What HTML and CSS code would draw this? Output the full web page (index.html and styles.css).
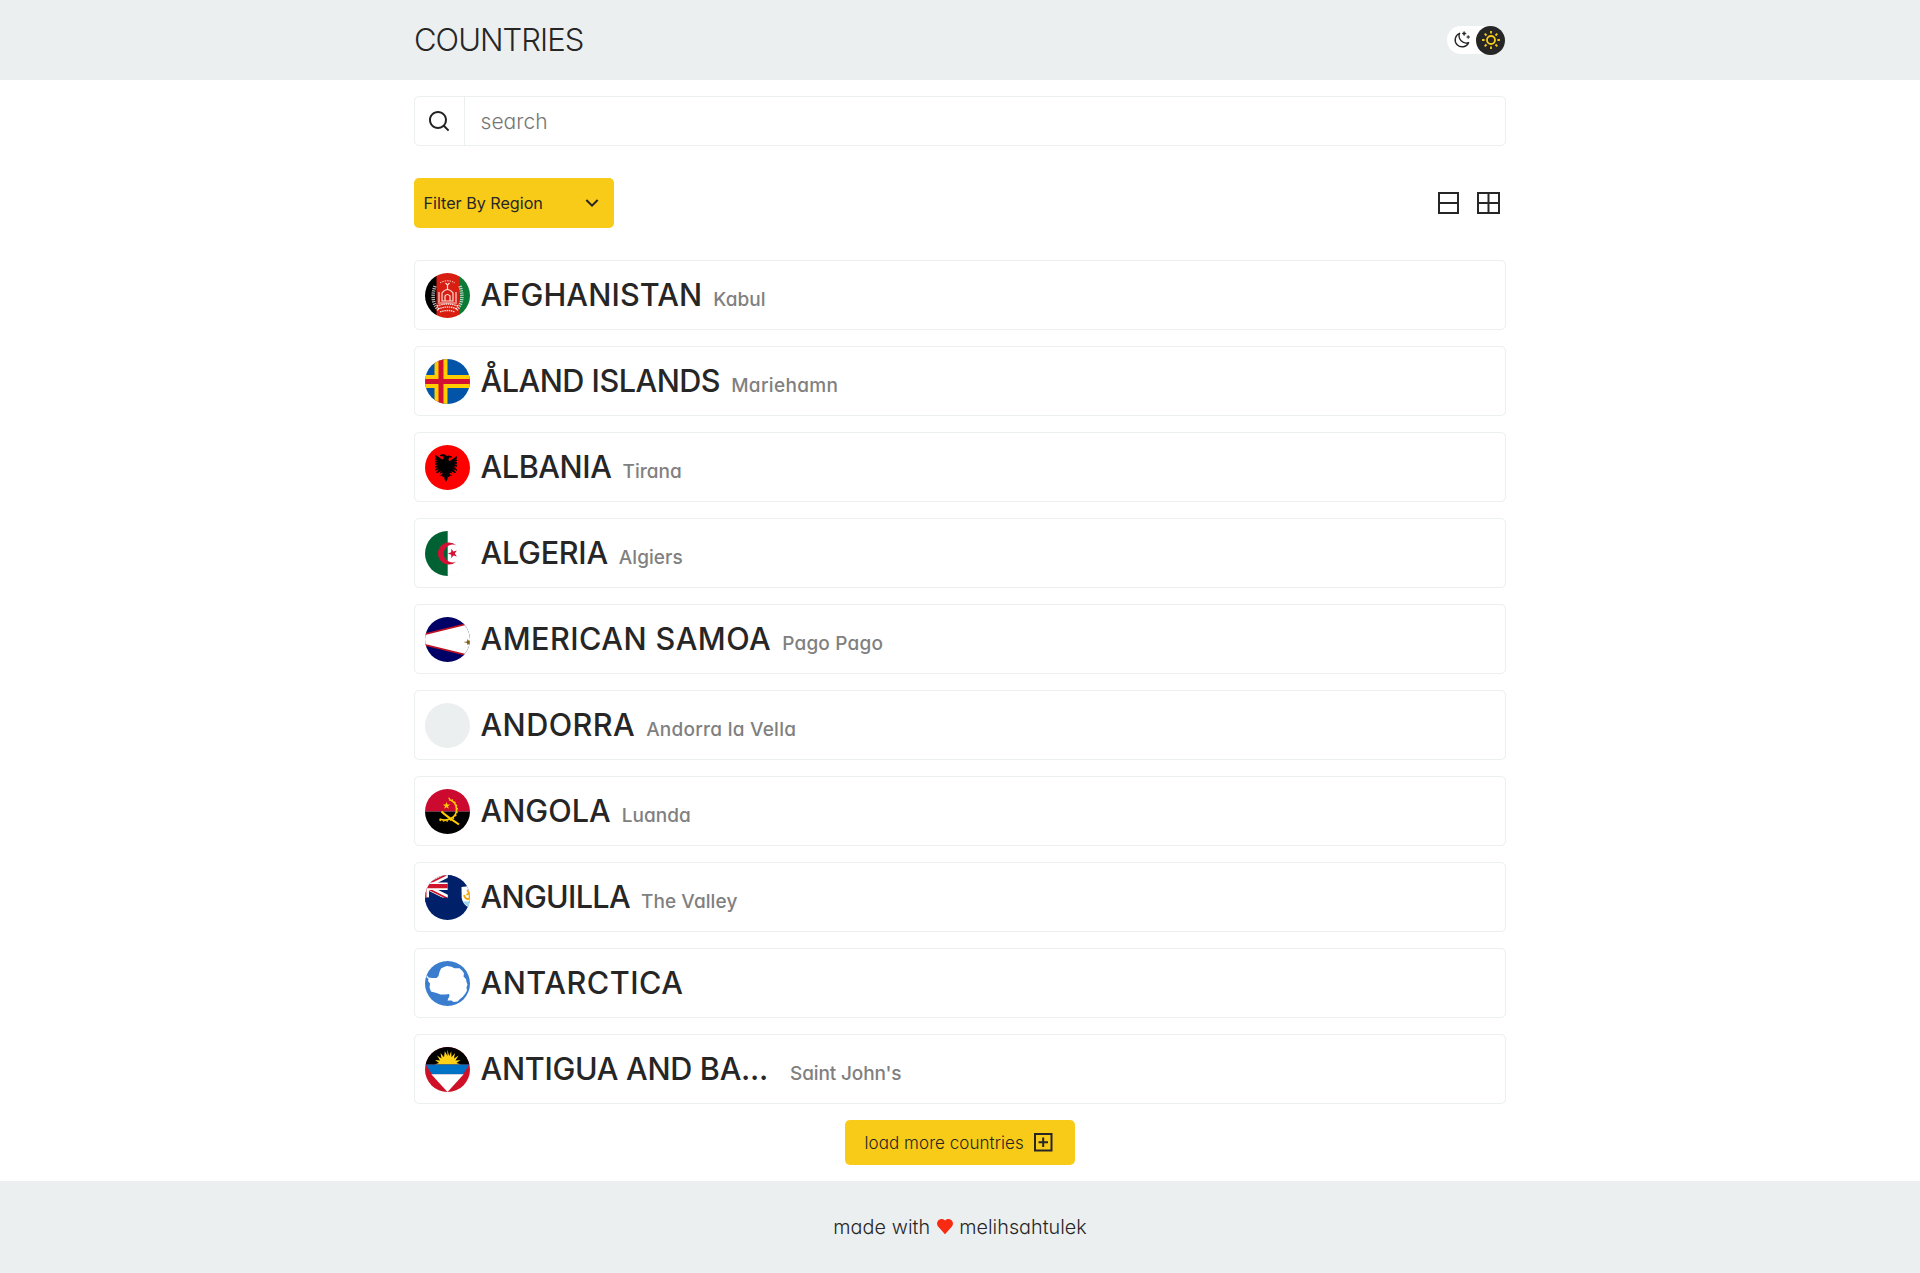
FILE: index.html
```html
<!DOCTYPE html>
<html lang="en">
<head>
<meta charset="utf-8">
<title>Countries</title>
<link rel="stylesheet" href="styles.css">
</head>
<body>
<header class="header">
  <div class="container header-inner">
    <h1 class="brand">COUNTRIES</h1>
    <div class="theme-toggle">
      <svg class="moon" viewBox="0 0 18 18" width="18" height="18" fill="none" stroke="#262626" stroke-width="1.4" stroke-linejoin="round"><path d="M6.600 2.300A7 7 0 1 0 15.600 11.600A7.100 7.100 0 0 1 6.600 2.300Z"/><path d="M11.100.4l.7 1.400 1.500.7-1.500.7-.7 1.500-.7-1.500-1.400-.7 1.400-.7zM15.200 4.300l.5 1.200 1.200.5-1.200.5-.5 1.200-.5-1.200-1.200-.5 1.200-.5z" fill="#262626" stroke-width=".5"/></svg>
      <span class="knob"><svg viewBox="0 0 18 18" width="18" height="18" fill="none" stroke="#f8cb18" stroke-width="1.8"><circle cx="9" cy="9" r="4"/><path d="M9 .1v2.500M9 15.400v2.500M.1 9h2.500M15.400 9h2.500M2.700 2.700l1.800 1.800M13.500 13.500l1.800 1.800M2.700 15.300l1.800-1.800M13.500 4.500l1.800-1.800"/></svg></span>
    </div>
  </div>
</header>
<main class="container main">
  <div class="search">
    <span class="search-icon"><svg viewBox="0 0 24 24" width="24" height="24" fill="#222"><path d="M18.031 16.617l4.283 4.282-1.415 1.415-4.282-4.283A8.96 8.96 0 0 1 11 20c-4.968 0-9-4.032-9-9s4.032-9 9-9 9 4.032 9 9a8.96 8.96 0 0 1-1.969 5.617zm-2.006-.742A6.977 6.977 0 0 0 18 11c0-3.868-3.133-7-7-7-3.868 0-7 3.132-7 7 0 3.867 3.132 7 7 7a6.977 6.977 0 0 0 4.875-1.975l.15-.15z"/></svg></span>
    <input class="search-input" type="text" placeholder="search">
  </div>
  <div class="toolbar">
    <div class="filter">Filter By Region
      <svg viewBox="0 0 24 24" width="24" height="24" fill="#262626"><path d="M12 13.172l4.950-4.950 1.414 1.414L12 16 5.636 9.636 7.050 8.222z"/></svg>
    </div>
    <div class="views">
      <svg viewBox="0 0 24 24" width="24" height="24" fill="none" stroke="#262626" stroke-width="2"><path d="M3 2h19v20H3zM3 12h19"/></svg>
      <svg viewBox="0 0 24 24" width="24" height="24" fill="none" stroke="#262626" stroke-width="2"><path d="M2 2h21v20H2zM2 12h21M12.500 2v20"/></svg>
    </div>
  </div>
  <ul class="list">
    <li class="row afghanistan">
      <svg class="flag" viewBox="0 0 45 45"><path fill="#000" d="M0 0h12v45H0z"/><path fill="#d81e10" d="M11.500 0h23v45h-23z"/><path fill="#0a7a36" d="M34 0h11v45H34z"/>
        <g fill="none" stroke="#fff" stroke-opacity=".85"><path stroke-width="1" stroke-dasharray="1.500 1" d="M15 10q7.500-4.500 15 0"/><path stroke-width="3.500" stroke-dasharray="1.200 1" stroke-opacity=".7" d="M10 13c-3 9-3 18 4 24M35 13c3 9 3 18-4 24"/><path stroke-width="1.300" stroke-dasharray="1.500 .7" d="M12 33q10-4 21 0M13 36q10-4 19 0M15 39q8-3 15 0"/><path stroke-width="1.200" d="M20.500 10l2 2 2-2M22.500 12v4M17 20q5.500-7 11 0v8H17zM14 19v10M31 19v10M13 30h19M20 28v-5q2.500-3 5 0v5"/></g></svg>
      <h2 class="name">AFGHANISTAN</h2><span class="city">Kabul</span></li>
    <li class="row aland">
      <svg class="flag" viewBox="0 0 45 45"><path fill="#0254a8" d="M0 0h45v45H0z"/><path fill="#ffcd00" d="M9.500 0h13v45h-13zM0 16h45v13H0z"/><path fill="#d21034" d="M13.500 0h5v45h-5zM0 20h45v5H0z"/></svg>
      <h2 class="name">ÅLAND ISLANDS</h2><span class="city">Mariehamn</span></li>
    <li class="row albania">
      <svg class="flag" viewBox="0 0 45 45"><path fill="#f00" d="M0 0h45v45H0z"/><path d="M22.500 13l-1-2.500-3-1.500-3 .8-.8 1.200 3 .2 1 2.300-1.500 1-3-2-4-3v2.500l2 1.300-2.200-.2v1.500l2.700 1-2.700.2v1.500l2.900.4-2.900.9v1.500l3.200-.3-3.200 1.800v1.500l3.500-1.200-3.500 2.700v1.500l4-2-3 3.500 1.200.6 3.800-2.300-1.500 2.800 3-1.200-.3 1.700-2.700 1.300 2.700.3.800 1.500 1.200-.8.3 2.500 1.500 3 1.500-3 .3-2.500 1.200.8.8-1.500 2.700-.3-2.700-1.300-.3-1.700 3 1.200-1.500-2.800 3.800 2.300 1.200-.6-3-3.500 4 2v-1.500l-3.500-2.700 3.500 1.200V23l-3.200-1.800 3.200.3V20l-2.900-.9 2.900-.4v-1.500l-2.700-.2 2.700-1v-1.500l-2.200.2 2-1.300v-2.500l-4 3-3 2-1.500-1 1-2.300 3-.2-.8-1.200-3-.8-3 1.500z"/></svg>
      <h2 class="name">ALBANIA</h2><span class="city">Tirana</span></li>
    <li class="row algeria">
      <svg class="flag" viewBox="0 0 45 45"><path fill="#fff" d="M0 0h45v45H0z"/><path fill="#006233" d="M0 0h22.700v45H0z"/><path fill="#d21034" d="M31.500 14.500a11 11 0 1 0 0 16 8.900 8.900 0 1 1 0-16zM22.800 22.500l3.400-1.200.1-3.600 2.100 2.900 3.500-1-2.100 2.900 2.100 2.900-3.500-1-2.100 2.900-.1-3.600z"/></svg>
      <h2 class="name">ALGERIA</h2><span class="city">Algiers</span></li>
    <li class="row samoa">
      <svg class="flag" viewBox="0 0 45 45"><path fill="#006" d="M0 0h45v45H0z"/><path fill="#fff" stroke="#bd1021" stroke-width="1.700" d="M-22 22.500L48 5.300v34.400z"/><path fill="#806018" d="M38.500 25l3.500-.5.500-2.500 1.500 2 2-1v5l-2-1-1.500 1-.5-2z"/></svg>
      <h2 class="name">AMERICAN SAMOA</h2><span class="city">Pago Pago</span></li>
    <li class="row andorra">
      <svg class="flag" viewBox="0 0 45 45"></svg>
      <h2 class="name">ANDORRA</h2><span class="city">Andorra la Vella</span></li>
    <li class="row angola">
      <svg class="flag" viewBox="0 0 45 45"><path fill="#cc092f" d="M0 0h45v22.500H0z"/><path d="M0 22.500h45V45H0z"/><g fill="none" stroke="#ffcb00"><path stroke-width="1.700" d="M24 10.500a10.300 10.300 0 0 1 1.500 19.300c-4 1.800-7.500 1.500-11 .2"/><path stroke-width="1.200" stroke-dasharray="1.500 2" d="M23.500 9.200a11.700 11.700 0 0 1 2.500 21.800c-4.500 1.800-8.500 1.300-12 0"/><path stroke-width="2.100" d="M16.500 22.500c4 4 10 8 17.500 13"/></g><path fill="#ffcb00" d="M21.500 13l1 2.500h2.700L23 17.200l.8 2.600-2.300-1.500-2.300 1.500.8-2.600-2.200-1.700h2.700z"/></svg>
      <h2 class="name">ANGOLA</h2><span class="city">Luanda</span></li>
    <li class="row anguilla">
      <svg class="flag" viewBox="0 0 45 45"><path fill="#00206a" d="M0 0h45v45H0z"/><path stroke="#fff" stroke-width="5" d="M-22.500 0l45.300 22.500M-22.500 22.500L22.800 0"/><path stroke="#cf142b" stroke-width="1.800" d="M0 12.200l22 11M2 9.300L21 0"/><path fill="#fff" d="M-1 7.500h23.800v7.500H-1zM0 7.500h4v15H0z"/><path fill="#00206a" d="M0 22.700h23.500V27H0zM22.800 0H27v24h-4.200z"/><path fill="#cf142b" d="M0 9h22.800v4.300H0zM0 13h1.500v9.500H0z"/><path fill="#fff" d="M36.500 12q4-.5 8.500-1v22q-7-2.500-8.300-10z"/><path fill="#9cd3ee" d="M37.800 26.500H45V32q-5-1.500-7.200-5.500z"/><path fill="none" stroke="#f7a100" stroke-width="1.700" d="M42 15q3.500 3-.5 5M39 20q1 4.500 5.500 4M44.500 18v6"/></svg>
      <h2 class="name">ANGUILLA</h2><span class="city">The Valley</span></li>
    <li class="row antarctica">
      <svg class="flag" viewBox="0 0 45 45"><path fill="#3a7dce" d="M0 0h45v45H0z"/><path fill="#fff" d="M1.500 13.500l2 3 4 .5h4l2-2 1-4 1.500-3.500L19 6l3-1 4.500.8 3 1.500h5L37.500 10l1.500 2.500-.5 3L41 18l.5 3 1 2.500-1 3 .5 3-2 3.500-2.500 3-3 2.500-2 2-4 .5-2-1.500h-4l1-2.500 1-2-.5-2-3.500.5h-5l-4-1.500L6 30.500l-1.500-4 .5-4L3 20l.5-2-2-2z"/></svg>
      <h2 class="name">ANTARCTICA</h2></li>
    <li class="row antigua">
      <svg class="flag" viewBox="0 0 45 45"><path fill="#ce1126" d="M0 0h45v45H0z"/><path d="M0 0h45v17.500H0z"/><path fill="#fcd116" d="M9.500 17.500l4.500-1.500-4-3 5 .5-3-5 4.500 3-1-5.500 3.500 4.300.8-6L22.500 9l-.2-6.500 1.900 6.500 2-4.700.3 6L30 6l-1 5.500 4.500-3-3 5 5-.5-4 3 4.500 1.500z"/><path fill="#0072c6" d="M.8 17.500h43.400L38 27.500H7z"/><path fill="#fff" d="M6.300 27.300h32.400L22.500 45z"/></svg>
      <h2 class="name">ANTIGUA AND BA...</h2><span class="city">Saint John's</span></li>
  </ul>
  <button class="load">load more countries
    <svg viewBox="0 0 24 24" width="24" height="24" fill="none" stroke="#262626" stroke-width="2"><path d="M4 3h16.500v16.500H4zM7.500 11.200H17M12.200 6.500V16"/></svg>
  </button>
</main>
<footer class="footer">
  <span class="made">made with</span>
  <svg viewBox="0 0 16 16" width="16" height="16"><path fill="#f92a12" d="M8 1.400A4.600 4.600 0 0 1 14.700 7.800L8 15.300 1.300 7.800A4.600 4.600 0 0 1 8 1.400z"/></svg>
  <span class="author">melihsahtulek</span>
</footer>
</body>
</html>
```
FILE: styles.css
```css
* { box-sizing: border-box; margin: 0; padding: 0; }
body {
  font-family: "Inter", "Noto Sans", sans-serif;
  font-feature-settings: "cv11";
  color: #262626;
  background: #fff;
}
svg { display: block; flex: none; }
.container { width: 1092px; margin: 0 auto; }

.header { height: 80px; background: #ebeff0; }
.header-inner { height: 100%; display: flex; align-items: center; justify-content: space-between; }
.brand { font-size: 31px; font-weight: 300; letter-spacing: -0.96px; padding-bottom: 2px; }
.theme-toggle {
  width: 58px; height: 28px; margin-right: 1px;
  display: flex; align-items: center; justify-content: space-between;
  padding-left: 6px; border-radius: 14px; background: #fff;
}
.knob {
  width: 29px; height: 29px; border-radius: 50%; background: #262626;
  display: flex; align-items: center; justify-content: center;
}

.main { display: flex; flex-direction: column; padding: 16px 0; }
.search {
  height: 50px; display: flex; overflow: hidden;
  border: 1px solid #ebeff0; border-radius: 5px;
}
.search-icon {
  width: 50px; padding-right: 1px;
  display: flex; align-items: center; justify-content: center;
  border-right: 1px solid #ebeff0;
}
.search-input {
  flex: 1; border: 0; outline: 0; padding-left: 15.500px; background: none;
  font: inherit; font-size: 21px; font-weight: 300; letter-spacing: 0.05px;
  font-feature-settings: inherit;
}
.search-input::placeholder { color: #757575; }

.toolbar { display: flex; align-items: center; justify-content: space-between; margin: 32px 0; }
.filter {
  width: 200px; height: 50px; padding: 0 10px 0 9.500px;
  display: flex; align-items: center; justify-content: space-between;
  border-radius: 5px; background: #f8cb18;
  font-size: 16.200px; letter-spacing: -0.03px;
}
.views { display: flex; gap: 16px; padding-right: 6px; }

.list { list-style: none; display: flex; flex-direction: column; gap: 16px; }
.row {
  height: 70px; padding-left: 10px;
  display: flex; align-items: baseline;
  border: 1px solid #ebeff0; border-radius: 5px;
}
.flag {
  width: 45px; height: 45px; align-self: center; margin-right: 10.500px;
  border-radius: 50%; background: #ebeff0;
}
.name { font-size: 30.600px; line-height: 68px; font-weight: 500; margin-right: 11px; white-space: nowrap; }
.city { font-size: 19px; font-weight: 500; color: #808080; white-space: nowrap; }

.afghanistan .name { letter-spacing: 0.12px; }
.aland .name { letter-spacing: -0.5px; }
.albania .name { letter-spacing: -0.42px; }
.algeria .name { letter-spacing: -0.28px; }
.samoa .name { letter-spacing: 0.46px; }
.andorra .name { letter-spacing: 0.42px; }
.angola .name { letter-spacing: 0; }
.anguilla .name { letter-spacing: -0.7px; }
.antarctica .name { letter-spacing: 0.52px; }
.antigua .name { letter-spacing: -0.3px; width: 298.500px; }
.afghanistan .city { letter-spacing: 0.08px; }
.aland .city { letter-spacing: 0.35px; }
.albania .city { letter-spacing: 0.05px; }
.algeria .city { letter-spacing: 0.05px; }
.samoa .city { letter-spacing: 0.2px; }
.andorra .city { letter-spacing: 0.25px; }
.angola .city { letter-spacing: 0.04px; }
.anguilla .city { letter-spacing: 0.1px; }
.antigua .city { letter-spacing: -0.13px; }

.load {
  align-self: center; width: 230px; height: 45px; margin-top: 16px; padding: 0 20px 0 19.500px;
  display: flex; align-items: center; justify-content: space-between;
  border: 0; border-radius: 5px; background: #f8cb18; color: #262626;
  font: inherit; font-size: 17px; font-weight: 300; letter-spacing: 0.06px;
  font-feature-settings: inherit;
}

.footer {
  height: 92px; padding-bottom: 1px;
  display: flex; align-items: center; justify-content: center;
  background: #ebeff0; font-size: 19.800px; font-weight: 300;
}
.footer svg { margin: 0 6px 0 7px; }
.made { letter-spacing: 0.07px; }
.author { letter-spacing: 0; }
```
